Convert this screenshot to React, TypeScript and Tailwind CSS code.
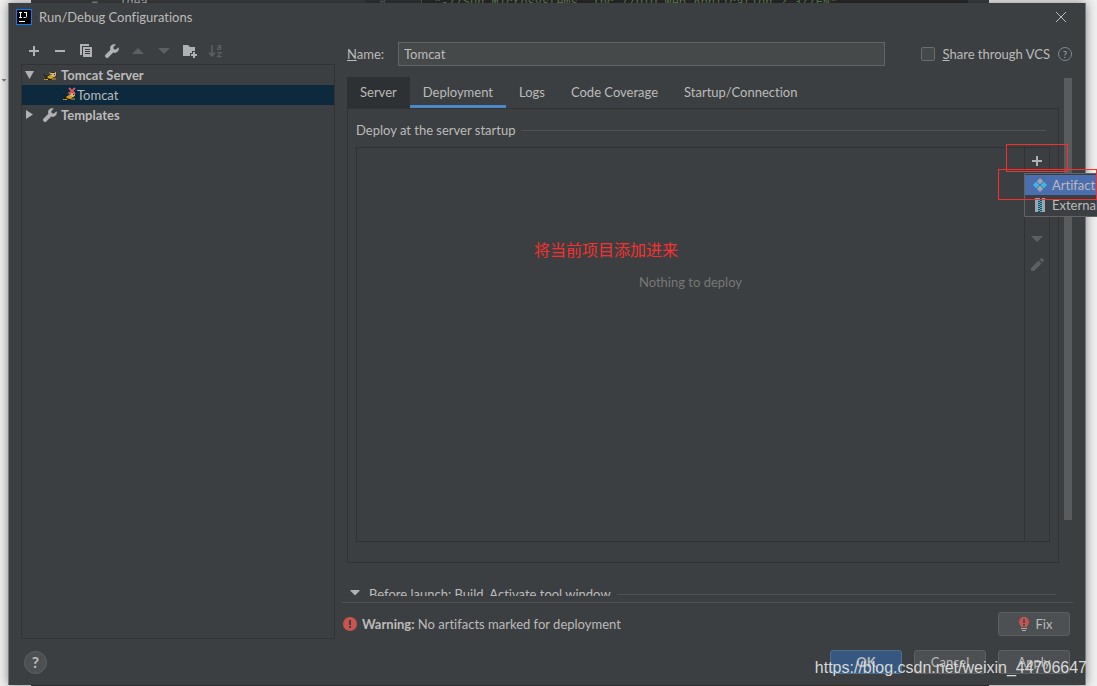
import React from "react";
import { FaCaretDown, FaFolder } from "react-icons/fa";

type IconProps = { className?: string };
type ButtonProps = { children: React.ReactNode; primary?: boolean };

const tabs = ["Server", "Deployment", "Logs", "Code Coverage", "Startup/Connection"];

function PlusIcon({ className }: IconProps) {
  return (
    <svg viewBox="0 0 16 16" className={"size-4 shrink-0 " + (className ?? "")} fill="#afb1b3" shapeRendering="crispEdges">
      <path d="M7 3h2v4h4v2H9v4H7V9H3V7h4z" />
    </svg>
  );
}

function MinusIcon() {
  return (
    <svg viewBox="0 0 16 16" className="size-4" fill="#afb1b3" shapeRendering="crispEdges">
      <path d="M3 7h10v2H3z" />
    </svg>
  );
}

function CopyIcon() {
  return (
    <svg viewBox="0 0 16 16" className="size-4" fill="#afb1b3">
      <path d="M2 1h9v2H4v9H2z" />
      <path fillRule="evenodd" d="M5 4h9v10H5zM7 6v1h5V6zm0 2v1h5V8zm0 2v1h5v-1z" />
    </svg>
  );
}

function WrenchIcon() {
  return (
    <svg viewBox="0 0 16 16" className="size-4 shrink-0" fill="#afb1b3">
      <path d="M14.600 4.200 12 6.600 9.700 6.200 9.400 4 11.900 1.400C10.200.8 8.300 1.200 7.100 2.500 6 3.700 5.800 5.300 6.400 6.700L1.400 11.700a1.600 1.600 0 0 0 0 2.300l.6.600a1.600 1.600 0 0 0 2.300 0l5-5c1.400.6 3 .3 4.200-.8 1.200-1.200 1.700-3 1.100-4.600z" />
    </svg>
  );
}

function TriangleIcon({ up }: { up?: boolean }) {
  return (
    <svg viewBox="0 0 16 16" className="size-4" fill="#5d6062">
      <path d={up ? "M2 11h12L8 5z" : "M2 5h12l-6 6z"} />
    </svg>
  );
}

function FolderPlusIcon() {
  return (
    <svg viewBox="0 0 16 16" className="size-4" fill="#afb1b3">
      <path d="M1 2h5l2 2h5v4h-3v2H8v3H1z" />
      <path d="M11 9h2v2h2v2h-2v2h-2v-2H9v-2h2z" />
    </svg>
  );
}

function SortIcon() {
  return (
    <svg viewBox="0 0 16 16" className="size-4" fill="none" stroke="#5d6062" strokeWidth="1.500">
      <path d="M4 2v11M1 9.500l3 3.500 3-3.500" />
      <path d="M9.500 2.700h3v4M12.500 4.500h-2a1 1 0 0 0 0 2h2M9.500 9.500h3.500l-3.500 4.200h4" strokeWidth="1.200" />
    </svg>
  );
}

function TomcatIcon({ failed }: { failed?: boolean }) {
  return (
    <svg viewBox="0 0 16 16" className="size-4 shrink-0">
      <path d="M2 7.500 4 9l3-.5 3-3 4-.5.500 4-2.500 1.500L9 13H4l-2-1 3-2z" fill="#231f17" />
      <path d="m7 5 1.500 1h4L14 4.500v4L12 10.500 9 9z" fill="#d8b878" />
      <path d="M5 10.500 8 8.500l3 2-1.500 1zM2 12.500h4M10 12h4" fill="#d5a21c" stroke="#d5a21c" />
      <path d="M8.500 7.500h1M12 7.500h1" stroke="#222" />
      <path d="M1.500 7.500 4 9M3.500 12l2-1.500" stroke="#191919" />
      {failed && <path d="m8 1 6 6m0-6L8 7" stroke="#db5860" strokeWidth="1.800" />}
    </svg>
  );
}

function ArrowIcon({ open }: { open?: boolean }) {
  return (
    <svg viewBox="0 0 16 16" className="size-4 shrink-0" fill="#afb1b3">
      <path d={open ? "M3 4h9l-4.500 8z" : "M4 3v9l7-4.500z"} />
    </svg>
  );
}

function PencilIcon() {
  return (
    <svg viewBox="0 0 16 16" className="size-4" fill="#5d6062">
      <path d="M2 11 9.500 3.500l3 3L5 14H2zM10.500 2.500l1-1a1.400 1.400 0 0 1 2 0l1 1a1.400 1.400 0 0 1 0 2l-1 1z" />
    </svg>
  );
}

function ArtifactIcon() {
  return (
    <svg viewBox="0 0 16 16" className="size-4 shrink-0">
      <path d="m8 1 3.200 3.200L8 7.400 4.800 4.200zM8 8.600l3.200 3.200L8 15l-3.200-3.200z" fill="#9aa7b0" />
      <path d="m4.200 4.800 3.200 3.200-3.200 3.200L1 8zM11.800 4.800 15 8l-3.200 3.200L8.600 8z" fill="#40b6e0" />
    </svg>
  );
}

function ArchiveIcon() {
  return (
    <svg viewBox="0 0 16 16" className="size-4 shrink-0">
      <path d="M3 1h3v14H3zM10 1h3v14h-3z" fill="#9aa7b0" />
      <path d="M7 1v14M9 2v13" stroke="#40b6e0" strokeWidth="2" strokeDasharray="1 1" />
    </svg>
  );
}

function Logo() {
  return (
    <svg viewBox="0 0 16 16" className="size-4">
      <path d="M0 0h16v16H0z" fill="#087cfa" />
      <path d="M1 1h14v14H1z" fill="#000" />
      <path d="M3 3.500h3M4.500 3v5M3 8.500h3M8 3.500h3M10.500 3v4.500q0 1-1 1H7.500M3 12.500h6" stroke="#fff" fill="none" />
    </svg>
  );
}

function DialogButton({ children, primary }: ButtonProps) {
  return (
    <button
      className={
        "flex h-6 w-[72px] items-center justify-center gap-1 rounded-[3px] border " +
        (primary ? "border-[#4c708c] bg-[#365880] font-bold" : "border-[#5e6060] bg-[#4c5052]")
      }
    >
      {children}
    </button>
  );
}

function IdeStrip() {
  return (
    <div className="mr-[108px] ml-[31px] flex h-[3px] shrink-0 overflow-hidden bg-[#2b2b2b] font-['Liberation_Mono',monospace] text-[12px] leading-[7px] whitespace-nowrap">
      <div className="flex w-[334px] shrink-0 gap-2 bg-[#3c3f41] pl-[61px]">
        <FaFolder className="size-3 shrink-0 text-[#87939a]" />
        .idea
      </div>
      <div className="w-[57px] shrink-0 border-r border-[#555555] bg-[#313335] pl-[14px] text-[#606366]">8</div>
      <div className="flex-1 pl-3 text-[#6a8759]">"-//Sun Microsystems, Inc.//DTD Web Application 2.3//EN"</div>
      <div className="w-[21px] bg-[#3c3f41]"></div>
    </div>
  );
}

function Sidebar() {
  return (
    <div className="flex w-[314px] shrink-0 flex-col">
      <div className="flex h-[33px] items-center gap-[10px] px-[5px] pt-[7px]">
        <button aria-label="Add"><PlusIcon /></button>
        <button aria-label="Remove"><MinusIcon /></button>
        <button aria-label="Copy"><CopyIcon /></button>
        <button aria-label="Edit templates"><WrenchIcon /></button>
        <button aria-label="Move up"><TriangleIcon up /></button>
        <button aria-label="Move down"><TriangleIcon /></button>
        <button aria-label="New folder"><FolderPlusIcon /></button>
        <button aria-label="Sort"><SortIcon /></button>
      </div>
      <div className="flex-1 border border-[#323232] leading-5">
        <div className="flex h-5 items-center font-bold">
          <ArrowIcon open />
          <span className="ml-1 flex items-center gap-[3px]"><TomcatIcon />Tomcat Server</span>
        </div>
        <div className="flex h-5 items-center bg-[#0d293e] pl-[39px]">
          <TomcatIcon failed />
          Tomcat
        </div>
        <div className="flex h-5 items-center font-bold">
          <ArrowIcon />
          <span className="ml-1 flex items-center gap-[3px]"><WrenchIcon />Templates</span>
        </div>
      </div>
    </div>
  );
}

function DeployBox() {
  return (
    <div className="relative mx-2 mb-5 flex flex-1 border border-[#323232]">
      <div className="flex flex-1 justify-center pt-[124px] text-[#777777]">Nothing to deploy</div>
      <div className="flex w-[25px] flex-col items-center border-l border-[#323232] pt-[5px]">
        <button aria-label="Add artifact"><PlusIcon /></button>
        <div className="mt-[62px] flex flex-col gap-[10px]">
          <button aria-label="Down"><TriangleIcon /></button>
          <button aria-label="Edit"><PencilIcon /></button>
        </div>
      </div>
      <div className="absolute top-[93px] left-[177px] font-['Noto_Sans_CJK_SC',sans-serif] text-[16px] leading-4 text-[#f5302e]">
        将当前项目添加进来
      </div>
      <div className="absolute top-[25px] -right-[48px] z-10 h-11 w-[73px] overflow-hidden border border-r-0 border-[#616365] bg-[#3c3f41] py-px whitespace-nowrap">
        <button className="flex h-5 w-full items-center gap-1 bg-[#4b6eaf] pl-[7px]"><ArtifactIcon />Artifact...</button>
        <button className="flex h-5 w-full items-center gap-1 pl-[7px]"><ArchiveIcon />External Source...</button>
      </div>
      <div className="absolute -top-1 -right-[19px] z-20 h-7 w-[62px] border border-[#f5302e]"></div>
      <div className="absolute top-[21px] -right-[48px] z-20 h-[31px] w-[99px] border border-[#f5302e]"></div>
    </div>
  );
}

function Editor() {
  return (
    <div className="flex min-w-0 flex-1 flex-col">
      <div className="flex h-[46px] shrink-0 items-center pr-[13px] pl-[5px]">
        <label htmlFor="name" className="w-[51px]"><u>N</u>ame:</label>
        <input id="name" defaultValue="Tomcat" className="h-6 min-w-0 flex-1 border border-[#646464] bg-[#45494a] px-[5px]" />
        <label className="ml-9 flex items-center gap-2">
          <input type="checkbox" className="size-[14px] appearance-none rounded-[2px] border border-[#6b6b6b] bg-[#43494a]" />
          <span><u>S</u>hare through VCS</span>
        </label>
        <button aria-label="About sharing" className="ml-2 flex size-[14px] items-center justify-center rounded-full border border-[#7f8b91] text-[10px] leading-3 text-[#9aa7b0]">?</button>
      </div>
      <div className="flex min-h-0 flex-1 pr-[13px] pl-[5px]">
        <div className="flex min-w-0 flex-1 flex-col">
          <div className="flex h-[31px] shrink-0">
            {tabs.map((tab) => (
              <button
                key={tab}
                className={
                  "px-[13px] pb-[2px] " +
                  (tab === "Server" ? "bg-[#2e3133]" : "") +
                  (tab === "Deployment" ? "shadow-[inset_0_-3px_0_#4a88c7]" : "")
                }
              >
                {tab}
              </button>
            ))}
          </div>
          <div className="flex h-[455px] shrink-0 flex-col border border-[#323232]">
            <div className="flex h-[38px] items-center gap-[6px] px-2 pt-1">
              Deploy at the server startup
              <div className="mr-1 h-px flex-1 bg-[#515151]"></div>
            </div>
            <DeployBox />
          </div>
        </div>
        <div className="mt-px ml-[5px] h-[442px] w-2 bg-[#595b5d]"></div>
      </div>
      <div className="flex h-3 shrink-0 items-start gap-[6px] overflow-hidden pr-[29px] pl-[5px]">
        <FaCaretDown className="size-4 shrink-0 text-[#afb1b3]" />
        <span className="leading-5 whitespace-nowrap">Before launch: Build, Activate tool window</span>
        <div className="mt-[10px] h-px flex-1 bg-[#515151]"></div>
      </div>
      <div className="mt-[6px] mr-3 h-px shrink-0 bg-[#515151]"></div>
      <div className="flex h-9 shrink-0 items-center pt-[6px] pr-[15px]">
        <svg viewBox="0 0 14 14" className="mr-[5px] ml-px size-[14px]">
          <circle cx="7" cy="7" r="7" fill="#c75450" />
          <path d="M6 3h2v5H6zM6 9h2v2H6z" fill="#3c3f41" />
        </svg>
        <p className="flex-1"><b>Warning:</b> No artifacts marked for deployment</p>
        <DialogButton>
          <svg viewBox="0 0 16 16" className="size-4">
            <path d="M8 1a5 5 0 0 0-5 5c0 2 1.500 3 2 5h6c.5-2 2-3 2-5a5 5 0 0 0-5-5z" fill="#c75450" />
            <path d="M7 3h2v4H7zM7 8h2v2H7z" fill="#4c5052" />
            <path d="M5 12.500h6M6 14.500h4" stroke="#afb1b3" />
          </svg>
          Fix
        </DialogButton>
      </div>
    </div>
  );
}

export default function App() {
  return (
    <div className="relative flex h-screen flex-col overflow-hidden bg-[#f0f0f0] font-['Lato','Noto_Sans',sans-serif] text-[13px] leading-5 text-[#bbbbbb] [font-variant-ligatures:none]">
      <IdeStrip />
      <div className="mr-[11px] ml-2 flex min-h-0 flex-1 flex-col border-x border-[#77797a] bg-[#3c3f41] shadow-[0_0_10px_rgba(0,0,0,0.45)]">
        <div className="flex h-7 shrink-0 items-center pr-[18px] pl-[7px]">
          <Logo />
          <h1 className="ml-[7px] flex-1">Run/Debug Configurations</h1>
          <button aria-label="Close">
            <svg viewBox="0 0 12 12" className="size-3" stroke="#bbbbbb"><path d="m1 1 10 10M11 1 1 11" /></svg>
          </button>
        </div>
        <div className="flex min-h-0 flex-1 gap-[7px] pl-3">
          <Sidebar />
          <Editor />
        </div>
        <div className="flex h-[46px] shrink-0 items-center gap-3 px-[15px]">
          <button className="mr-auto size-[23px] rounded-full border border-[#5e6060] bg-[#4c5052] text-[16px] leading-5 font-bold">?</button>
          <DialogButton primary>OK</DialogButton>
          <DialogButton>Cancel</DialogButton>
          <DialogButton>Apply</DialogButton>
        </div>
      </div>
      <div className="mr-[108px] ml-[31px] h-px shrink-0 bg-[#2b2b2b]"></div>
      <FaCaretDown className="absolute top-[76px] left-0 size-2 text-[#777777]" />
      <div className="absolute right-[10px] bottom-2 font-['Liberation_Sans',sans-serif] text-[16px] text-[#d8d8d8]">
        https://blog.csdn.net/weixin_44706647
      </div>
    </div>
  );
}
